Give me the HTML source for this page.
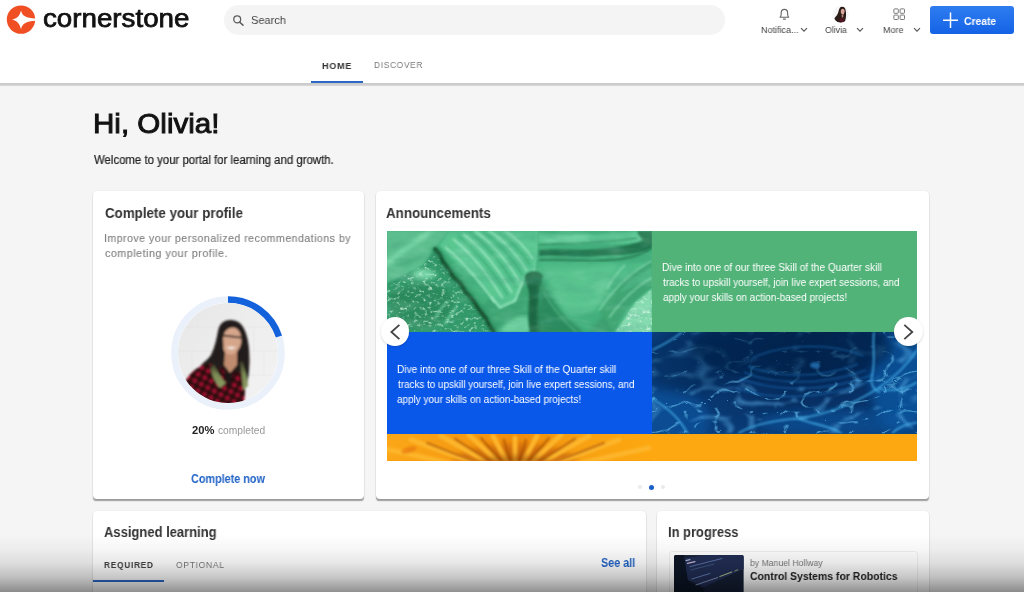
<!DOCTYPE html>
<html lang="en">
<head>
<meta charset="utf-8">
<title>Cornerstone</title>
<style>
*{box-sizing:border-box;margin:0;padding:0}
html,body{width:1024px;height:592px;overflow:hidden}
body{position:relative;background:#f5f5f5;font-family:"Liberation Sans",sans-serif;color:#222}
.abs{position:absolute}
.t{position:absolute;white-space:nowrap;line-height:1;transform-origin:0 0;will-change:transform;filter:blur(.35px)}
/* header */
#hdr{position:absolute;left:0;top:0;width:1024px;height:83.4px;background:#fff}
#hdrline{position:absolute;left:0;top:83.3px;width:1024px;height:2.4px;background:linear-gradient(#c6c6c6,#d8d8d8)}
#logo{position:absolute;left:6px;top:5px;width:30px;height:30px}
#brand{font-weight:normal;color:#111;letter-spacing:0;-webkit-text-stroke:0.75px #111}
#search{position:absolute;left:224px;top:5px;width:501px;height:30px;border-radius:15px;background:#f4f4f4}
#stext{left:252px;top:14px;font-size:11.5px;color:#444}
.hl{font-size:9.5px;color:#444}
#create{position:absolute;left:930px;top:6px;width:84px;height:28px;border-radius:3px;background:linear-gradient(#2f7cf0,#1463e6)}
#createt{left:965px;top:15px;font-size:11px;font-weight:bold;color:#fff}
.nav{font-size:9.3px;letter-spacing:0.8px}
#x14{color:#444!important}
#navline{position:absolute;left:310.8px;top:80.5px;width:52px;height:2.9px;background:#2b68c6}
/* hero */
#hi{font-weight:normal;color:#111;-webkit-text-stroke:.95px #111}
#welcome{color:#222;-webkit-text-stroke:.2px #222}
.card{position:absolute;background:#fff;border-radius:4px;box-shadow:0 2.2px 1.2px -0.4px rgba(0,0,0,.36),0 0 1.2px rgba(0,0,0,.12)}
.ctitle{font-size:14px;font-weight:bold;color:#333}
.desc{color:#7f7f7f;letter-spacing:.5px;-webkit-text-stroke:.12px #7f7f7f}
.link{font-weight:bold;color:#2163c6}
.ann{font-size:10.5px;color:#fff}
.th{top:590.6px;font-size:8.5px;font-weight:bold;color:#777;letter-spacing:.4px}
#fade{position:absolute;left:0;top:534px;width:1024px;height:58px;background:linear-gradient(rgba(0,0,0,0) 0%,rgba(0,0,0,.03) 25%,rgba(0,0,0,.095) 50%,rgba(0,0,0,.225) 75%,rgba(0,0,0,.43) 100%)}
/*FIT*/
#brand{left:42.88px;top:5.7px;font-size:25.5px;transform:scaleX(1.087)}
#stext{left:251.28px;top:15.3px;font-size:11.5px;transform:scaleX(0.960)}
#x1{left:760.68px;top:25.0px;font-size:9.4px;transform:scaleX(0.963)}
#x2{left:825.14px;top:25.0px;font-size:9.4px;transform:scaleX(0.927)}
#x3{left:882.88px;top:25.0px;font-size:9.4px;transform:scaleX(0.958)}
#createt{left:964.23px;top:15.9px;font-size:11px;transform:scaleX(0.941)}
#x4{left:322.03px;top:60.8px;font-size:9.6px;transform:scaleX(0.942)}
#x5{left:373.75px;top:60.2px;font-size:9.6px;transform:scaleX(0.870)}
#hi{left:92.73px;top:109.6px;font-size:27.6px;transform:scaleX(1.071)}
#welcome{left:93.90px;top:153.9px;font-size:12px;transform:scaleX(0.949)}
#x6{left:104.52px;top:205.6px;font-size:14px;transform:scaleX(0.953)}
#x7{left:104.04px;top:232.6px;font-size:11px;transform:scaleX(0.962)}
#x8{left:104.51px;top:247.6px;font-size:11px;transform:scaleX(0.978)}
#x9{left:192.25px;top:424.7px;font-size:11px;transform:scaleX(1.019)}
#x10{left:217.89px;top:425.5px;font-size:10px;transform:scaleX(1.022)}
#x11{left:191.15px;top:472.6px;font-size:12px;transform:scaleX(0.901)}
#x12{left:386.42px;top:205.7px;font-size:14px;transform:scaleX(0.955)}
#x20{left:662.28px;top:261.7px;font-size:10.5px;transform:scaleX(0.963)}
#x21{left:662.76px;top:276.7px;font-size:10.5px;transform:scaleX(0.940)}
#x22{left:662.53px;top:291.7px;font-size:10.5px;transform:scaleX(0.947)}
#x23{left:397.18px;top:364.0px;font-size:10.5px;transform:scaleX(0.961)}
#x24{left:397.67px;top:378.8px;font-size:10.5px;transform:scaleX(0.940)}
#x25{left:397.43px;top:393.5px;font-size:10.5px;transform:scaleX(0.947)}
#x13{left:103.94px;top:524.7px;font-size:14px;transform:scaleX(0.928)}
#x14{left:103.96px;top:560.3px;font-size:9.6px;transform:scaleX(0.871)}
#x15{left:175.86px;top:559.8px;font-size:9.6px;transform:scaleX(0.888)}
#x16{left:600.55px;top:556.8px;font-size:12px;transform:scaleX(0.898)}
#x17{left:668.28px;top:524.7px;font-size:14px;transform:scaleX(0.923)}
#x18{left:750.14px;top:557.5px;font-size:9.5px;transform:scaleX(0.911)}
#x19{left:750.15px;top:570.9px;font-size:11.5px;transform:scaleX(0.909)}
/*ENDFIT*/
</style>
</head>
<body>

<!-- HEADER -->
<div id="hdr"></div>
<div id="hdrline"></div>
<svg id="logo" viewBox="0 0 30 30">
  <circle cx="15" cy="14.6" r="14.2" fill="#f04e23"/>
  <path d="M15 5.4 C16.2 10.6 19.6 13 29.8 13.5 L29.8 15.7 C19.6 16.2 16.2 18.8 15 24.2 C13.8 18.8 11 15.7 5.8 14.6 C11 13.5 13.8 10.6 15 5.4Z" fill="#fff"/>
</svg>
<div class="t" id="brand">cornerstone</div>

<div id="search"></div>
<svg class="abs" style="left:231.6px;top:14px" width="13" height="13" viewBox="0 0 14 14"><circle cx="5.6" cy="5.8" r="3.7" fill="none" stroke="#5c5c5c" stroke-width="1.4"/><path d="M8.4 8.8 L11.8 12" stroke="#5c5c5c" stroke-width="1.6" stroke-linecap="round"/></svg>
<div class="t" id="stext">Search</div>

<!-- bell -->
<svg class="abs" style="left:777px;top:6px" width="15" height="15" viewBox="0 0 15 15"><path d="M3.1 11.2 C4.3 10.2 4.2 8.8 4.2 7 A3.2 3.6 0 0 1 10.6 7 C10.6 8.8 10.5 10.2 11.7 11.2 Z" fill="none" stroke="#666" stroke-width="1.15" stroke-linejoin="round"/><path d="M6.4 13.1 H8.4" stroke="#666" stroke-width="1.2" stroke-linecap="round"/></svg>
<div id="x1" class="t hl">Notifica...</div>
<svg class="abs" style="left:800px;top:27px" width="8" height="6" viewBox="0 0 8 6"><path d="M1 1.2 L4 4.2 L7 1.2" fill="none" stroke="#555" stroke-width="1.1"/></svg>
<!-- avatar -->
<svg class="abs" style="left:832px;top:6px" width="17" height="17" viewBox="0 0 17 17"><defs><clipPath id="avc"><circle cx="8.5" cy="8.5" r="8.3"/></clipPath><filter id="avb" x="-10%" y="-10%" width="120%" height="120%"><feGaussianBlur stdDeviation="0.45"/></filter></defs><g clip-path="url(#avc)"><rect width="17" height="17" fill="#f7f6f6"/><g filter="url(#avb)"><path d="M10.3 0.4 C7.6 0.6 7 3.4 6.4 6 C5.6 9 3.6 10.6 2.4 12.4 C3.4 14.8 5.6 16.4 8 16.8 L12.6 16.4 C13.8 13.6 14.2 10 14 6.6 C13.8 3.4 13 0.4 10.3 0.4Z" fill="#2a1a17"/><ellipse cx="10.7" cy="5.6" rx="1.9" ry="2.8" fill="#d8a69a"/><path d="M7.2 13 C8.6 11.4 11 11.6 12.2 12.6 L12.4 16.6 L7.6 16.8Z" fill="#4b1623"/><path d="M9.6 8.6 L11.4 8.6 L11.2 11.6 L9.8 11.6Z" fill="#b98a7c"/></g></g></svg>
<div id="x2" class="t hl">Olivia</div>
<svg class="abs" style="left:856px;top:27px" width="8" height="6" viewBox="0 0 8 6"><path d="M1 1.2 L4 4.2 L7 1.2" fill="none" stroke="#555" stroke-width="1.1"/></svg>
<!-- grid -->
<svg class="abs" style="left:893px;top:7.8px" width="12.4" height="12.4" viewBox="0 0 14 14"><g fill="none" stroke="#777" stroke-width="1.1"><rect x="1" y="1" width="5" height="5" rx=".8"/><rect x="8" y="1" width="5" height="5" rx=".8"/><rect x="1" y="8" width="5" height="5" rx=".8"/><rect x="8" y="8" width="5" height="5" rx=".8"/></g></svg>
<div id="x3" class="t hl">More</div>
<svg class="abs" style="left:913px;top:27px" width="8" height="6" viewBox="0 0 8 6"><path d="M1 1.2 L4 4.2 L7 1.2" fill="none" stroke="#555" stroke-width="1.1"/></svg>

<div id="create"></div>
<svg class="abs" style="left:942px;top:12px" width="17" height="17" viewBox="0 0 17 17"><path d="M8.5 0.6 V16 M1 8.3 H16" stroke="#fff" stroke-width="1.5"/></svg>
<div class="t" id="createt">Create</div>

<div id="x4" class="t nav" style="font-weight:bold;color:#333">HOME</div>
<div id="x5" class="t nav" style="color:#777">DISCOVER</div>
<div id="navline"></div>

<!-- HERO -->
<div class="t" id="hi">Hi, Olivia!</div>
<div class="t" id="welcome">Welcome to your portal for learning and growth.</div>

<!-- CARD 1 -->
<div class="card" style="left:92.7px;top:191px;width:271.5px;height:307.5px"></div>
<div id="x6" class="t ctitle">Complete your profile</div>
<div id="x7" class="t desc">Improve your personalized recommendations by</div>
<div id="x8" class="t desc">completing your profile.</div>
<svg class="abs" id="ring" style="left:168px;top:293px" width="120" height="120" viewBox="0 0 120 120">
<defs>
<clipPath id="pc"><circle cx="60" cy="60" r="50"/></clipPath>
<filter id="pb" x="-10%" y="-10%" width="120%" height="120%"><feGaussianBlur stdDeviation="0.8"/></filter>
<pattern id="plaid" width="7.4" height="7.4" patternUnits="userSpaceOnUse" patternTransform="rotate(28)"><rect width="7.4" height="7.4" fill="#a81030"/><rect width="3.9" height="7.4" fill="#2a0810" opacity=".85"/><rect width="7.4" height="3.9" fill="#22060c" opacity=".82"/></pattern><linearGradient id="gh" x1="0" y1="0" x2="0" y2="1"><stop offset="0" stop-color="#3a3626"/><stop offset=".45" stop-color="#7b8c55"/><stop offset="1" stop-color="#8c9c64"/></linearGradient>
<linearGradient id="pbg" x1="0" y1="0" x2="1" y2="1"><stop offset="0" stop-color="#e6e6e6"/><stop offset=".5" stop-color="#eeeeee"/><stop offset="1" stop-color="#f3f3f3"/></linearGradient>
</defs>
  <circle cx="60" cy="60" r="53.5" fill="none" stroke="#ebf1fa" stroke-width="6.6"/>
  <path d="M60 6.5 A53.5 53.5 0 0 1 110.9 43.5" fill="none" stroke="#1461dc" stroke-width="6.6"/>
  <g clip-path="url(#pc)">
    <rect x="8" y="8" width="104" height="104" fill="url(#pbg)"/>
    <g stroke="#dcdcdc" stroke-width=".7" opacity=".4"><path d="M10 34 H110 M10 58 H110 M10 82 H110 M30 10 V34 M86 34 V58 M24 58 V82 M96 58 V82"/></g>
    <g filter="url(#pb)">
      <!-- hair back -->
      <path d="M62.6 27 C55 27 51.5 31 50 38 C48.5 46 47 54 43 62 C40 67 35 69 32 74 C34 84 40 92 46 96 L76 98 C80 90 81.5 80 81.2 68 C81 56 80 46 76.5 38 C74 31 69 27 62.6 27Z" fill="#231c1a"/>
      <!-- shirt -->
      <path d="M12 100 C16 88 22 80 28 76 C34 72 42 70 50 72 C54 74 57 77 59.2 80 C64 76 72 78 76 83 C78 92 77 104 75 116 L16 116Z" fill="url(#plaid)"/>
      <path d="M55 74 L60 96 L67 76Z" fill="#1c1214"/>
      <!-- neck -->
      <path d="M57 58 L69 58 L69 72 L62 80 L56 72Z" fill="#c08c70"/>
      <!-- face -->
      <ellipse cx="63.6" cy="48" rx="9.8" ry="13.6" fill="#d6a68b" transform="rotate(8 63.6 48)"/>
      <path d="M58.5 54 C60.5 57 65.5 57.4 68 54 C65.5 53.2 61 53.2 58.5 54Z" fill="#f3ece8" opacity=".85"/>
      <!-- glasses -->
      <path d="M54.5 42.4 L73.5 44.6" stroke="#2a2020" stroke-width="1.7"/>
      <!-- hair front strands -->
      <path d="M62 27.5 C55 29 52 38 52.5 48 C52 58 48 66 42 74 L50 80 C55 70 56 58 55.2 48 C55 40 57 33 66 30.5Z" fill="#231c1a"/>
      <path d="M66 28.5 C72 30 75.5 38 75.8 46 C76.5 56 76.5 64 75.5 72 L81.2 72 C82 60 80.5 46 77 38 C74 31 70 27.5 66 28.5Z" fill="#231c1a"/>
      <!-- green ends -->
      <path d="M46 71 C49 78 53 85 58 90 L52 95 C47 89 43.5 82 42.5 75Z" fill="url(#gh)"/>
      <path d="M74.5 68 C77 78 80 86 80 93 L75 97 C74.5 88 73.5 78 72 70Z" fill="url(#gh)"/>
    </g>
  </g>
</svg>
<div id="x9" class="t" style="font-weight:bold;color:#222">20%</div>
<div id="x10" class="t" style="color:#999">completed</div>
<div id="x11" class="t link">Complete now</div>

<!-- CARD 2 -->
<div class="card" style="left:375.5px;top:191px;width:553px;height:307.5px"></div>
<div id="x12" class="t ctitle">Announcements</div>
<div class="abs" style="left:386.7px;top:230.6px;width:265px;height:101.6px;background:#4aa877"></div>
<div class="abs" style="left:651.7px;top:230.6px;width:265px;height:101.6px;background:#52b379"></div>
<div class="abs" style="left:386.7px;top:332.2px;width:265px;height:101.6px;background:#0a58ea"></div>
<div class="abs" style="left:651.7px;top:332.2px;width:265px;height:101.6px;background:#0b4a86"></div>
<div class="abs" style="left:386.7px;top:433.8px;width:265px;height:26.8px;background:#f59a14"></div>
<div class="abs" style="left:651.7px;top:433.8px;width:265px;height:26.8px;background:#fda810"></div>
<!-- MARBLE -->
<svg class="abs" style="left:386.7px;top:230.6px" width="265" height="101.6" viewBox="0 0 265 102" preserveAspectRatio="none">
<defs>
<filter id="mb" x="-5%" y="-5%" width="110%" height="110%"><feGaussianBlur stdDeviation="0.9"/></filter>
<filter id="mb2" x="-10%" y="-10%" width="120%" height="120%"><feGaussianBlur stdDeviation="2.4"/></filter>
<filter id="spk" x="0" y="0" width="100%" height="100%"><feTurbulence type="fractalNoise" baseFrequency="0.22 0.3" numOctaves="3" seed="7"/><feColorMatrix values="0 0 0 0 0.72  0 0 0 0 0.97  0 0 0 0 0.84  0 0 0 3.2 -1.75"/><feGaussianBlur stdDeviation="0.35"/></filter>
<filter id="grain" x="0" y="0" width="100%" height="100%"><feTurbulence type="fractalNoise" baseFrequency="0.035 0.09" numOctaves="4" seed="3"/><feColorMatrix values="0 0 0 0 0.05  0 0 0 0 0.32  0 0 0 0 0.2  0 0 0 2.2 -0.95"/></filter>
<filter id="glow" x="0" y="0" width="100%" height="100%"><feTurbulence type="fractalNoise" baseFrequency="0.03 0.07" numOctaves="3" seed="21"/><feColorMatrix values="0 0 0 0 0.62  0 0 0 0 0.95  0 0 0 0 0.78  0 0 0 2.2 -1.1"/></filter>
<clipPath id="mclip"><rect width="265" height="102"/></clipPath>
<clipPath id="spk1"><path d="M0 52 L10 48 L36 35 L47 20 L64 42 L80 62 L92 78 L108 102 L0 102Z"/></clipPath>
<clipPath id="spk2"><path d="M228 102 L248 72 L265 58 L265 102Z"/></clipPath>
</defs>
<g clip-path="url(#mclip)">
<rect width="265" height="102" fill="#45b27d"/>
<!-- upper-left smooth -->
<path d="M0 0 H62 L50 15 L36 35 L10 48 L0 52Z" fill="#5ec08f" filter="url(#mb)"/>
<path d="M-2 34 C12 22 26 12 44 0" stroke="#86e2b2" stroke-width="3.5" fill="none" filter="url(#mb2)"/>
<path d="M0 40 C12 36 26 30 40 22" stroke="#46b07c" stroke-width="3" fill="none" filter="url(#mb2)"/>
<!-- lower-left dark speckled -->
<path d="M0 52 L10 48 L36 35 L47 20 L64 42 L80 62 L92 78 L108 102 L0 102Z" fill="#33996a" filter="url(#mb)"/>
<path d="M2 62 C18 54 40 50 58 58 C72 70 66 92 34 98 C12 100 0 82 2 62Z" fill="#2a8a5c" filter="url(#mb2)"/>
<path d="M26 40 C36 36 44 38 50 44 C44 50 34 50 26 46Z" fill="#79d6a8" filter="url(#mb2)"/>
<rect width="110" height="102" filter="url(#spk)" clip-path="url(#spk1)" opacity=".8"/>
<path d="M48 88 C52 80 56 74 62 70 M58 94 C62 86 66 80 70 76" stroke="#8fe3b8" stroke-width="2" fill="none" filter="url(#mb)" opacity=".7"/>
<!-- below band, between veins -->
<path d="M104 66 L112 76 L127 70 L135 50 L141 44 L143 102 L108 102 L92 78Z" fill="#3da572" filter="url(#mb)"/>
<path d="M112 102 C118 90 130 84 142 86 L144 102Z" fill="#72d3a2" filter="url(#mb2)"/>
<!-- striped light band -->
<path d="M62 0 H150 L148 40 L136 50 L128 70 L113 77 L104 66 L85 45 L62 25 L52 15Z" fill="#5ac791" filter="url(#mb)"/>
<g fill="none" stroke="#b8f5d6" stroke-width="1.3" filter="url(#mb)" opacity=".95">
<path d="M66 8 C84 22 100 42 116 68"/><path d="M76 3 C94 16 110 36 125 62"/><path d="M88 0 C106 13 120 30 132 50"/><path d="M102 0 C116 9 130 24 140 40"/><path d="M118 0 C128 6 138 16 146 28"/><path d="M58 16 C76 30 92 50 108 72"/>
</g>
<g fill="none" stroke="#38a571" stroke-width="1.8" filter="url(#mb)" opacity=".75">
<path d="M71 5 C89 19 105 39 121 65"/><path d="M82 1 C100 14 115 33 129 56"/><path d="M95 0 C111 11 125 27 136 45"/><path d="M110 0 C122 8 134 20 143 34"/>
</g>
<!-- band lip -->
<path d="M104 66 L113 77 L128 70 L136 50" fill="none" stroke="#a4efc8" stroke-width="1.8" filter="url(#mb)"/>
<!-- dark vein along band -->
<path d="M47 17 L55 30 L64 42 L72 50 L80 62 L92 78 L100 90 L108 102" fill="none" stroke="#2b8a5b" stroke-width="8" filter="url(#mb2)" opacity=".8"/>
<path d="M47 17 L53 24 L56 31 L63 40 L66 46 L73 52 L79 62 L85 68 L92 79 L99 88 L103 96 L108 103" fill="none" stroke="#12502f" stroke-width="3.6" stroke-linejoin="round" filter="url(#mb)"/>
<!-- central dark vein -->
<path d="M138 45 C142 39 152 39 156 45 C153 56 151 70 153 84 C154 92 157 98 160 104 L143 104 C141 92 141 78 142 66 C142 56 138 52 138 45Z" fill="#1a6643" filter="url(#mb)"/>
<path d="M152 70 C158 80 166 92 172 104 L154 104 C152 92 151 80 152 70Z" fill="#2a8358" filter="url(#mb2)"/>
<path d="M150 0 C150 14 149 28 147 40" stroke="#79d7a7" stroke-width="1.2" fill="none" filter="url(#mb)"/>
<path d="M146 48 L146 100" stroke="#3f9f70" stroke-width="1.2" fill="none" filter="url(#mb)"/>
<!-- right body shading -->
<path d="M152 32 H265 V62 C240 50 200 42 152 40Z" fill="#50bc87" filter="url(#mb2)"/>
<path d="M157 38 C180 40 206 38 230 34 C224 50 216 66 208 80 C196 84 186 86 178 84 C170 70 162 54 157 38Z" fill="#5ac48f" filter="url(#mb2)"/>
<path d="M152 46 C158 58 166 72 176 84 C184 92 192 98 200 104 L152 104Z" fill="#2b895c" filter="url(#mb2)"/>
<path d="M156 60 C164 76 176 90 190 102" stroke="#54b987" stroke-width="1.6" fill="none" filter="url(#mb)" opacity=".8"/>
<path d="M200 104 C206 96 212 88 218 84 L232 92 L226 104Z" fill="#3a9e6d" filter="url(#mb2)"/>
<!-- upper-right streaks -->
<path d="M151 2 C190 6 230 3 265 -2 V12 C230 12 190 14 151 12Z" fill="#5fc995" filter="url(#mb)"/>
<path d="M152 19 C170 17 190 20 210 18 C230 16 248 14 258 8 L265 0 V18 C252 24 232 24 212 25 C192 27 170 24 152 25Z" fill="#237650" filter="url(#mb)"/>
<path d="M152 29 C175 28 200 31 225 29 C240 28 252 25 262 19" stroke="#2a8057" stroke-width="2.2" fill="none" filter="url(#mb)"/>
<path d="M152 14 C180 12 215 13 250 7" stroke="#379668" stroke-width="1.6" fill="none" filter="url(#mb)"/>
<path d="M250 0 H265 V16 C258 13 253 7 250 0Z" fill="#27784f" filter="url(#mb)"/>
<!-- layered light rims at right -->
<path d="M265 30 C246 40 228 56 212 80 L226 100 C236 80 250 66 265 58Z" fill="#3fa672" filter="url(#mb)"/><path d="M265 36 C252 42 240 52 232 62 C242 58 254 52 265 49Z" fill="#4db683" filter="url(#mb)"/>
<g fill="none" stroke="#98e6bf" stroke-width="1.1" filter="url(#mb)">
<path d="M265 30 C246 40 228 56 212 80"/><path d="M265 47 C250 55 236 68 222 87"/><path d="M238 34 C230 42 224 50 220 58"/>
</g>
<!-- bottom-right speckled -->
<path d="M228 102 L248 72 L265 58 V102Z" fill="#86dcb0" filter="url(#mb)"/>
<rect x="222" y="52" width="43" height="50" filter="url(#spk)" clip-path="url(#spk2)" opacity="1"/>
<rect width="265" height="102" filter="url(#glow)" opacity=".22"/>
<rect width="265" height="102" filter="url(#grain)" opacity=".3"/>
</g>
</svg>

<!-- WATER -->
<svg class="abs" style="left:651.7px;top:332.2px" width="265" height="101.6" viewBox="0 0 265 101" preserveAspectRatio="none">
<defs>
<radialGradient id="wg" cx="150" cy="22" r="160" gradientUnits="userSpaceOnUse" gradientTransform="translate(0 8) scale(1 .62)"><stop offset="0" stop-color="#04224c"/><stop offset=".45" stop-color="#072f63"/><stop offset="1" stop-color="#0a3f7d"/></radialGradient>
<filter id="wb" x="-5%" y="-5%" width="110%" height="110%"><feGaussianBlur stdDeviation="0.8"/></filter>
<filter id="wb2" x="-10%" y="-10%" width="120%" height="120%"><feGaussianBlur stdDeviation="4"/></filter>
<filter id="caus" x="0" y="0" width="100%" height="100%"><feTurbulence type="turbulence" baseFrequency="0.03 0.05" numOctaves="2" seed="11"/><feColorMatrix values="0 0 0 0 0.14  0 0 0 0 0.55  0 0 0 0 0.88  -14 0 0 0 1.3"/><feGaussianBlur stdDeviation="0.6"/></filter>
<filter id="caus2" x="0" y="0" width="100%" height="100%"><feTurbulence type="turbulence" baseFrequency="0.02 0.035" numOctaves="2" seed="4"/><feColorMatrix values="0 0 0 0 0.10  0 0 0 0 0.42  0 0 0 0 0.78  -7 0 0 0 1.1"/><feGaussianBlur stdDeviation="1.2"/></filter>
<clipPath id="wclip"><rect width="265" height="101"/></clipPath>
</defs>
<g clip-path="url(#wclip)">
<rect width="265" height="101" fill="url(#wg)"/>
<ellipse cx="14" cy="88" rx="44" ry="30" fill="#1159a4" opacity=".55" filter="url(#wb2)"/>
<ellipse cx="248" cy="48" rx="30" ry="50" fill="#115fac" opacity=".6" filter="url(#wb2)"/>
<ellipse cx="185" cy="90" rx="80" ry="13" fill="#0f569f" opacity=".55" filter="url(#wb2)"/>

<rect width="265" height="101" filter="url(#caus2)" opacity=".55"/>
<rect width="265" height="101" filter="url(#caus)" opacity=".6"/>
<ellipse cx="140" cy="16" rx="100" ry="32" fill="#04224c" opacity=".65" filter="url(#wb2)"/><ellipse cx="40" cy="30" rx="50" ry="30" fill="#04224c" opacity=".35" filter="url(#wb2)"/>
<g fill="none" stroke="#1f74bd" stroke-width="1" filter="url(#wb)" opacity=".8">
<path d="M92 40 C120 52 170 54 214 38"/><path d="M88 46 C122 60 176 60 222 42"/><path d="M96 34 C126 46 168 46 206 32"/><path d="M84 56 C124 70 184 66 228 44"/>
<path d="M100 26 C130 12 180 10 212 24"/>
</g>
<g fill="none" stroke="#44aee8" stroke-width="1.6" filter="url(#wb)" opacity=".95">
<path d="M86 101 C100 92 120 88 146 86 C176 82 204 70 226 56 C244 44 256 32 265 18"/>
<path d="M222 0 C220 14 224 28 220 44 C218 52 222 58 228 60"/>
<path d="M0 66 C10 72 22 80 30 92 L36 101"/><path d="M0 18 C8 14 18 10 30 0"/>
<path d="M226 56 C240 60 252 58 265 50"/><path d="M146 86 C160 92 176 92 190 101"/>
<path d="M240 101 C246 94 254 92 265 90"/>
</g>
<ellipse cx="163" cy="33" rx="5" ry="3" fill="#2a80c8" filter="url(#wb)" opacity=".7"/>
</g>
</svg>

<!-- SUNFLOWER -->
<svg class="abs" style="left:386.7px;top:433.8px" width="265" height="26.8" viewBox="0 0 265 27" preserveAspectRatio="none">
<defs>
<filter id="sb" x="-5%" y="-30%" width="110%" height="160%"><feGaussianBlur stdDeviation="1.2"/></filter>
<filter id="sb2" x="-5%" y="-30%" width="110%" height="160%"><feGaussianBlur stdDeviation="3"/></filter>
<linearGradient id="sg" x1="0" y1="0" x2="1" y2="0"><stop offset="0" stop-color="#fba718"/><stop offset=".3" stop-color="#f59a12"/><stop offset=".5" stop-color="#ef8d0e"/><stop offset=".72" stop-color="#f7a013"/><stop offset="1" stop-color="#fda810"/></linearGradient>
<clipPath id="sclip"><rect width="265" height="27"/></clipPath>
</defs>
<g clip-path="url(#sclip)">
<rect width="265" height="27" fill="url(#sg)"/>
<ellipse cx="128" cy="30" rx="62" ry="20" fill="#c2600a" opacity=".7" filter="url(#sb2)"/>
<g filter="url(#sb)" stroke-linecap="round" fill="none">
<g stroke="#fdb52c" stroke-width="5">
<path d="M128 44 L128 4"/><path d="M128 44 L106 2"/><path d="M128 44 L150 2"/><path d="M128 44 L82 1"/><path d="M128 44 L174 1"/><path d="M128 44 L54 2"/><path d="M128 44 L202 2"/><path d="M128 44 L24 6"/><path d="M128 44 L232 6"/><path d="M128 44 L-6 14"/><path d="M128 44 L262 14"/>
</g>
<g stroke="#a9500a" stroke-width="2.2" opacity=".7">
<path d="M128 44 L117 6"/><path d="M128 44 L139 6"/><path d="M128 44 L94 4"/><path d="M128 44 L162 4"/><path d="M128 44 L68 5"/><path d="M128 44 L188 5"/><path d="M128 44 L40 9"/><path d="M128 44 L217 9"/>
</g>
</g>
<ellipse cx="128" cy="34" rx="40" ry="12" fill="#7e3405" opacity=".55" filter="url(#sb2)"/>
<ellipse cx="22" cy="16" rx="8" ry="3" fill="#e5700c" opacity=".6" filter="url(#sb)" transform="rotate(-18 22 16)"/>
</g>
</svg>
<!--ENDTILES-->
<div id="x20" class="t ann">Dive into one of our three Skill of the Quarter skill</div>
<div id="x21" class="t ann">tracks to upskill yourself, join live expert sessions, and</div>
<div id="x22" class="t ann">apply your skills on action-based projects!</div>
<div id="x23" class="t ann">Dive into one of our three Skill of the Quarter skill</div>
<div id="x24" class="t ann">tracks to upskill yourself, join live expert sessions, and</div>
<div id="x25" class="t ann">apply your skills on action-based projects!</div>
<!-- arrows -->
<div class="abs" style="left:380.7px;top:317.4px;width:28.6px;height:28.6px;border-radius:50%;background:#fff;box-shadow:0 1px 2.5px rgba(0,0,0,.16)"></div>
<svg class="abs" style="left:388px;top:323.5px" width="14" height="16" viewBox="0 0 14 16"><path d="M11.4 0.9 L3.4 8 L11.4 15.1" fill="none" stroke="#444" stroke-width="1.8"/></svg>
<div class="abs" style="left:894.4px;top:317.2px;width:28.8px;height:28.8px;border-radius:50%;background:#fff;box-shadow:0 1px 2.5px rgba(0,0,0,.16)"></div>
<svg class="abs" style="left:901px;top:323.5px" width="14" height="16" viewBox="0 0 14 16"><path d="M3.3 0.9 L11.3 8 L3.3 15.1" fill="none" stroke="#444" stroke-width="1.8"/></svg>
<!-- dots -->
<div class="abs" style="left:638px;top:485.3px;width:4px;height:4px;border-radius:50%;background:#eaeaea"></div>
<div class="abs" style="left:649.2px;top:484.8px;width:5px;height:5px;border-radius:50%;background:#1b5fc9"></div>
<div class="abs" style="left:661.3px;top:485.3px;width:4px;height:4px;border-radius:50%;background:#eaeaea"></div>

<!-- CARD 3 -->
<div class="card" style="left:92.7px;top:511.2px;width:553.7px;height:100px"></div>
<div id="x13" class="t ctitle">Assigned learning</div>
<div id="x14" class="t nav" style="font-weight:bold;color:#333">REQUIRED</div>
<div id="x15" class="t nav" style="color:#777">OPTIONAL</div>
<div class="abs" style="left:92.7px;top:579.6px;width:71.7px;height:2.8px;background:#2b68c6"></div>
<div class="t th" style="left:106px">TITLE</div><div class="t th" style="left:149px">TYPE</div><div class="t th" style="left:193px">DUE DATE</div><div class="t th" style="left:262px">STATUS</div><div class="t th" style="left:350px">ACTIONS</div>
<div id="x16" class="t link">See all</div>

<!-- CARD 4 -->
<div class="card" style="left:656.8px;top:511.2px;width:271.8px;height:100px"></div>
<div id="x17" class="t ctitle">In progress</div>
<div class="abs" style="left:669px;top:550.5px;width:249px;height:60px;border:1px solid #f0f0f0;border-radius:3px"></div>
<svg class="abs" style="left:674.3px;top:555.3px" width="69.8" height="40" viewBox="0 0 70 40">
<defs><clipPath id="thc"><rect width="70" height="44" rx="2"/></clipPath><filter id="thb" x="-5%" y="-5%" width="110%" height="110%"><feGaussianBlur stdDeviation="0.5"/></filter></defs>
<g clip-path="url(#thc)"><rect width="70" height="44" fill="#162036"/>
<g filter="url(#thb)"><path d="M10 3 L70 -4 L70 14 L30 32 L12 24Z" fill="#222f54"/>
<path d="M0 0 H10 L14 26 L30 34 L30 44 H0Z" fill="#0e1426"/>
<g stroke-linecap="round" fill="none"><path d="M12 5.5 L16 4.6" stroke="#aab4d8" stroke-width="1.2"/><path d="M13.5 8.4 L21 6.6" stroke="#c8b6d8" stroke-width="1.3"/><path d="M16 11.6 L48 3.5" stroke="#5f77b0" stroke-width=".9"/><path d="M17 15 L40 9" stroke="#46608f" stroke-width=".8"/><path d="M18 24 L36 18.5" stroke="#6d86c2" stroke-width=".9"/><path d="M22 30 L44 22.5" stroke="#7f92bc" stroke-width="1"/><path d="M46 21.5 L58 17" stroke="#a8b88c" stroke-width="1.1"/><path d="M61 16 L64 14.8" stroke="#8ea27a" stroke-width="1"/></g>
</g></g></svg>
<div id="x18" class="t" style="color:#777">by Manuel Hollway</div>
<div id="x19" class="t" style="font-weight:bold;color:#222">Control Systems for Robotics</div>

<div id="fade"></div>
</body>
</html>
